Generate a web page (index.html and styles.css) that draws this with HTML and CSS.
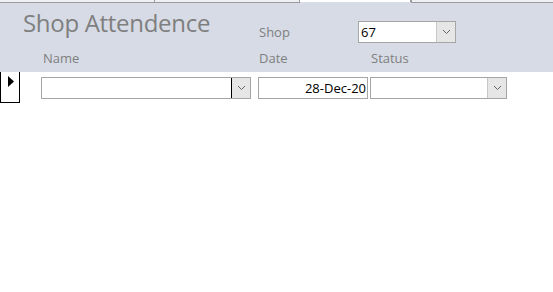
FILE: index.html
```html
<!DOCTYPE html>
<html lang="en">
<head>
    <meta charset="UTF-8" />
    <meta name="viewport" content="width=device-width, initial-scale=1.0" />
    <title>Shop Attendence</title>
    <link rel="stylesheet" href="styles.css">
</head>
<body>

<div class="tabs">
    <div class="tab tab-a"></div>
    <div class="tab tab-b"></div>
    <div class="tab tab-active"></div>
    <div class="tab tab-c"></div>
</div>

<div class="form-header">
    <div class="title-row">
        <h1 class="form-title">Shop Attendence</h1>
        <span class="label shop-label">Shop</span>
        <div class="combo shop-combo">
            <span class="combo-value">67</span>
            <span class="combo-btn">
                <svg width="9" height="6" viewBox="0 0 9 6"><path d="M1 1 L4.5 4.5 L8 1" fill="none" stroke="#666" stroke-width="1"/></svg>
            </span>
        </div>
    </div>
    <div class="label-row">
        <span class="label col-name">Name</span>
        <span class="label col-date">Date</span>
        <span class="label col-status">Status</span>
    </div>
</div>

<div class="detail-row">
    <div class="selector">
        <svg class="selector-arrow" width="7" height="11" viewBox="0 0 7 11"><path d="M0 0 L6 5.5 L0 11 Z" fill="#000"/></svg>
    </div>
    <div class="combo name-combo">
        <span class="combo-value"></span>
        <span class="combo-btn active">
            <svg width="9" height="6" viewBox="0 0 9 6"><path d="M1 1 L4.5 4.5 L8 1" fill="none" stroke="#666" stroke-width="1"/></svg>
        </span>
    </div>
    <div class="textbox date-box">28-Dec-20</div>
    <div class="combo status-combo">
        <span class="combo-value"></span>
        <span class="combo-btn">
            <svg width="9" height="6" viewBox="0 0 9 6"><path d="M1 1 L4.5 4.5 L8 1" fill="none" stroke="#666" stroke-width="1"/></svg>
        </span>
    </div>
</div>

</body>
</html>
```

FILE: styles.css
```css
body {
    margin: 0;
    background: #ffffff;
    font-family: "Open Sans", "Noto Sans", sans-serif;
}

.tabs {
    display: flex;
    height: 3px;
    background: #d6dbe5;
}
.tab {
    height: 2px;
    background: #eef0f4;
    border-bottom: 1px solid #9a9a9a;
    border-right: 1px solid #9a9a9a;
}
.tab-a {
    width: 154px;
}
.tab-b {
    width: 144px;
}
.tab-active {
    width: 110px;
    background: #ffffff;
    border-bottom: none;
}
.tab-c {
    flex: 1;
    border-left: 1px solid #9a9a9a;
    border-right: none;
}

.form-header {
    background: #d6dbe5;
    height: 69px;
}

.title-row {
    display: flex;
    align-items: flex-start;
    height: 46px;
}
.form-title {
    margin: 4px 0 0 23px;
    width: 236px;
    font-size: 24px;
    font-weight: normal;
    line-height: 32px;
    color: #7f7f7f;
    letter-spacing: -0.3px;
}
.label {
    font-size: 13px;
    color: #7f7f7f;
    line-height: 18px;
}
.shop-label {
    margin-top: 20px;
    width: 99px;
}

.combo {
    display: flex;
    box-sizing: border-box;
    border: 1px solid #a6a6a6;
    background: #ffffff;
    height: 22px;
}
.combo-value {
    flex: 1;
    font-size: 13px;
    line-height: 20px;
    padding-left: 2px;
    color: #000;
}
.combo-btn {
    width: 18px;
    background: #e6e6e6;
    border-left: 1px solid #c8c8c8;
    display: flex;
    align-items: center;
    justify-content: center;
}
.combo-btn.active {
    border-left: 1px solid #000;
}
.shop-combo {
    margin-top: 18px;
    width: 98px;
}

.label-row {
    display: flex;
}
.col-name {
    margin-left: 43px;
    width: 216px;
}
.col-date {
    width: 112px;
}

.detail-row {
    display: flex;
    align-items: flex-start;
}
.selector {
    box-sizing: border-box;
    width: 20px;
    height: 31px;
    border: 1px solid #000;
    border-top: none;
    padding: 4px 0 0 7px;
}
.selector-arrow {
    display: block;
}
.name-combo {
    margin: 5px 0 0 21px;
    width: 210px;
}
.textbox {
    box-sizing: border-box;
    border: 1px solid #a6a6a6;
    height: 22px;
    font-size: 13px;
    line-height: 20px;
    text-align: right;
    padding-right: 1px;
}
.date-box {
    margin: 5px 0 0 7px;
    width: 110px;
}
.status-combo {
    margin: 5px 0 0 2px;
    width: 137px;
}
```
